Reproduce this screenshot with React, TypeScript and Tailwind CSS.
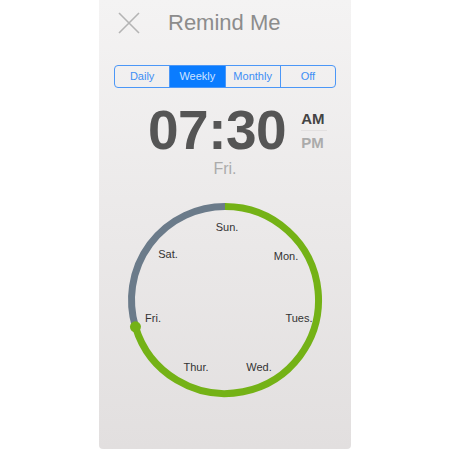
import React from "react";

const days = [
  { label: "Sun.", cls: "left-[102px] top-[27px]" },
  { label: "Mon.", cls: "left-[161px] top-[56px]" },
  { label: "Tues.", cls: "left-[174px] top-[118px]" },
  { label: "Wed.", cls: "left-[134px] top-[167px]" },
  { label: "Thur.", cls: "left-[71px] top-[167px]" },
  { label: "Fri.", cls: "left-[28px] top-[118px]" },
  { label: "Sat.", cls: "left-[43px] top-[54px]" },
];

const modes = ["Daily", "Weekly", "Monthly", "Off"];

export default function App() {
  return (
    <div className="min-h-[450px] w-full bg-white font-['Liberation_Sans',Arial,sans-serif]">
      <main className="mx-auto flex h-[449px] w-[252px] flex-col rounded-b-[4px] bg-gradient-to-b from-[#f4f3f3] to-[#e2dfdf]">
        <header className="flex h-[46px] items-center pl-[19px]">
          <svg width="22" height="22" viewBox="0 0 22 22" className="shrink-0">
            <path d="M1 1 L21 21 M21 1 L1 21" stroke="#b4b4b4" strokeWidth="1.6" fill="none" />
          </svg>
          <h1 className="ml-[28px] text-[22px] leading-none text-[#8c8c8c]">Remind Me</h1>
        </header>

        <div className="ml-[15px] mt-[19px] flex h-[23px] w-[222px] overflow-hidden rounded-[4px] border border-[#4b97f7]">
          {modes.map((m, i) => (
            <div
              key={m}
              className={
                "flex flex-1 items-center justify-center text-[11px] " +
                (i > 0 ? "border-l border-[#4b97f7] " : "") +
                (m === "Weekly" ? "bg-[#0a7cff] text-[#cfe3ff]" : "text-[#3d8ef5]")
              }
            >
              {m}
            </div>
          ))}
        </div>

        <div className="mt-[15px] flex items-start pl-[49px]">
          <div className="text-[55px] font-bold leading-[54px] tracking-[-0.5px] text-[#555555]">07:30</div>
          <div className="ml-[15px] mt-[8px] flex w-[26px] flex-col">
            <span className="text-[15px] font-bold leading-[15px] text-[#444444]">AM</span>
            <span className="my-[4px] h-px w-[26px] bg-[#e2e0e0]" />
            <span className="text-[15px] font-bold leading-[15px] text-[#ababab]">PM</span>
          </div>
        </div>
        <div className="mt-[2px] text-center text-[16px] leading-[20px] text-[#ababab]">Fri.</div>

        <div className="relative ml-[26px] mt-[21px] h-[200px] w-[200px]">
          <svg width="200" height="200" viewBox="0 0 200 200" className="absolute left-0 top-0">
            <path d="M100 6.5 A93.5 93.5 0 0 0 10.45 126.87" stroke="#6b7b8a" strokeWidth="7" fill="none" />
            <path d="M100 6.5 A93.5 93.5 0 1 1 10.45 126.87" stroke="#74b216" strokeWidth="7" fill="none" />
            <circle cx="10.45" cy="126.87" r="5.5" fill="#74b216" />
          </svg>
          {days.map((d) => (
            <span
              key={d.label}
              className={"absolute -translate-x-1/2 -translate-y-1/2 text-[11px] leading-none text-[#333333] " + d.cls}
            >
              {d.label}
            </span>
          ))}
        </div>
      </main>
    </div>
  );
}
